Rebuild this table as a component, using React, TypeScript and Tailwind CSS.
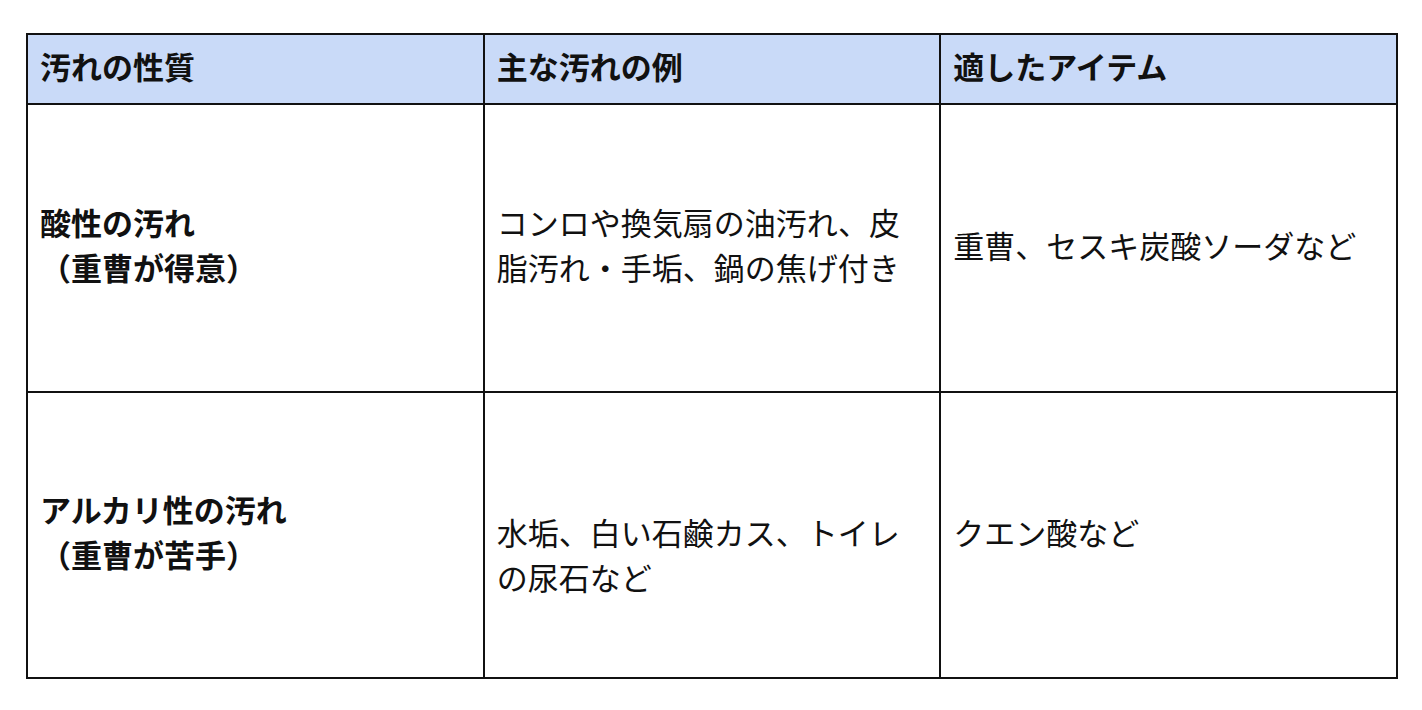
const rows = [
  {
    kind: ['酸性の汚れ', '（重曹が得意）'],
    examples: ['コンロや換気扇の油汚れ、皮', '脂汚れ・手垢、鍋の焦げ付き'],
    items: ['重曹、セスキ炭酸ソーダなど'],
    height: 'h-[288px]',
  },
  {
    kind: ['アルカリ性の汚れ', '（重曹が苦手）'],
    examples: ['', '水垢、白い石鹸カス、トイレ', 'の尿石など'],
    items: ['クエン酸など'],
    height: 'h-[286px]',
  },
]

function Lines({ lines }: { lines: string[] }) {
  return (
    <>
      {lines.map((line, i) => (
        <div key={i} className="min-h-[45px]">
          {line}
        </div>
      ))}
    </>
  )
}

export default function App() {
  return (
    <div
      className="min-h-screen bg-white pl-[26px] pt-[33px] text-[31px] leading-[45px] text-[#111]"
      style={{ fontFamily: '"Noto Sans CJK JP", "Noto Sans", sans-serif' }}
    >
      <table className="w-[1372px] table-fixed border-collapse">
        <thead>
          <tr className="h-[70px] bg-[#c9daf8]">
            {['汚れの性質', '主な汚れの例', '適したアイテム'].map((h) => (
              <th
                key={h}
                className="border-2 border-[#111] px-[12px] pb-[8px] text-left align-middle font-bold"
              >
                {h}
              </th>
            ))}
          </tr>
        </thead>
        <tbody>
          {rows.map((row) => (
            <tr key={row.kind[0]} className={row.height}>
              <td className="border-2 border-[#111] px-[12px] pb-[8px] align-middle font-bold">
                <Lines lines={row.kind} />
              </td>
              <td className="border-2 border-[#111] px-[12px] pb-[8px] align-middle">
                <Lines lines={row.examples} />
              </td>
              <td className="border-2 border-[#111] px-[12px] pb-[8px] align-middle">
                <Lines lines={row.items} />
              </td>
            </tr>
          ))}
        </tbody>
      </table>
    </div>
  )
}
